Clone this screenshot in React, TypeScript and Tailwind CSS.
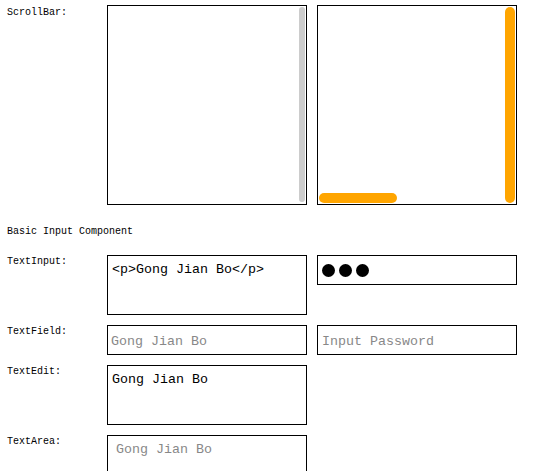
export default function App() {
  return (
    <div className="min-h-screen bg-white text-black pt-[5px] pl-[7px] font-['Liberation_Mono',monospace] text-[10px] leading-[12px]">

      {/* SCROLLBAR */}
      <div className="flex">
        <div className="w-[100px] pt-[2px]">ScrollBar:</div>
        <div className="flex gap-[10px]">
          <div className="w-[200px] h-[200px] border border-black flex justify-end p-px">
            <div className="w-[6px] h-[195px] rounded-full bg-[#cccccc]" />
          </div>
          <div className="w-[200px] h-[200px] border border-black flex justify-between items-end p-px">
            <div className="w-[78px] h-[10px] rounded-full bg-[#ffa500]" />
            <div className="w-[10px] h-[196px] rounded-full bg-[#ffa500]" />
          </div>
        </div>
      </div>

      <div className="mt-[21px] mb-[17px]">Basic Input Component</div>

      {/* INPUTS */}
      <div className="flex flex-col gap-[10px] text-[13.33px] leading-[16px]">

        <div className="flex">
          <div className="w-[100px] text-[10px] leading-[12px] pt-[1px]">TextInput:</div>
          <div className="flex gap-[10px] items-start">
            <div className="w-[200px] h-[60px] border border-black px-[4px] pt-[6px]">
              {'<p>Gong Jian Bo</p>'}
            </div>
            <div className="w-[200px] h-[30px] border border-black flex items-center gap-[4px] px-[4px]">
              <div className="w-[13px] h-[13px] rounded-full bg-black" />
              <div className="w-[13px] h-[13px] rounded-full bg-black" />
              <div className="w-[13px] h-[13px] rounded-full bg-black" />
            </div>
          </div>
        </div>

        <div className="flex">
          <div className="w-[100px] text-[10px] leading-[12px] pt-[1px]">TextField:</div>
          <div className="flex gap-[10px]">
            <div className="w-[200px] h-[30px] border border-black flex items-center px-[3px] pt-[3px] text-[#888888]">
              Gong Jian Bo
            </div>
            <div className="w-[200px] h-[30px] border border-black flex items-center px-[4px] pt-[3px] text-[#888888]">
              Input Password
            </div>
          </div>
        </div>

        <div className="flex">
          <div className="w-[100px] text-[10px] leading-[12px] pt-[1px]">TextEdit:</div>
          <div className="w-[200px] h-[60px] border border-black px-[4px] pt-[6px]">
            Gong Jian Bo
          </div>
        </div>

        <div className="flex">
          <div className="w-[100px] text-[10px] leading-[12px] pt-[1px]">TextArea:</div>
          <div className="w-[200px] h-[60px] border border-black px-[8px] pt-[6px] text-[#888888]">
            Gong Jian Bo
          </div>
        </div>

      </div>
    </div>
  )
}
